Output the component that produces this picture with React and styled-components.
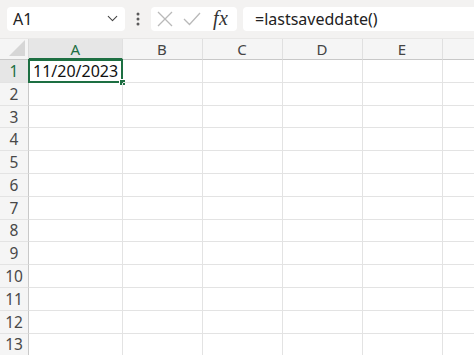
import React from 'react';
import styled, { createGlobalStyle } from 'styled-components';
import { ChevronDown } from 'lucide-react';

const GlobalStyle = createGlobalStyle`
    * { box-sizing: border-box; }
    body {
        margin: 0;
        background: #fff;
        font-family: "Noto Sans", "Open Sans", sans-serif;
    }
`;

const Page = styled.div`
    width: 474px;
    height: 355px;
    overflow: hidden;
    background: #fff;
`;

const FormulaBar = styled.div`
    display: flex;
    align-items: center;
    height: 39px;
    padding: 0 0 1px 7px;
    background: #f3f2f1;
    border-bottom: 1px solid #e8e7e6;
`;

const Box = styled.div`
    display: flex;
    align-items: center;
    height: 24px;
    background: #fff;
    border-radius: 4px;
    width: ${props => props.width ? props.width + 'px' : 'auto'};
    flex: ${props => props.grow ? 1 : 'none'};
`;

const NameBox = styled(Box)`
    justify-content: space-between;
    padding: 0 4px 0 6px;
    font-size: 16px;
    color: #222;
`;

const Dots = styled.div`
    width: 26px;
    display: flex;
    justify-content: center;
    color: #5a5a5a;
`;

const IconBox = styled(Box)`
    padding: 0 0 0 6px;
    color: #b9b9b9;
    & > svg { margin-right: 10px; }
`;

const Fx = styled.span`
    font-family: "Liberation Serif", serif;
    font-style: italic;
    font-size: 20px;
    color: #333;
    margin-left: 2px;
    letter-spacing: 0.5px;
`;

const FormulaInput = styled(Box)`
    margin-left: 6px;
    padding-left: 12px;
    border-radius: 4px 0 0 4px;
    font-size: 16px;
    color: #222;
`;

const Grid = styled.div`
    display: grid;
    grid-template-columns: 29px 93.5px repeat(5, 80px);
    grid-template-rows: 21px repeat(13, 22.8px);
`;

const Corner = styled.div`
    position: relative;
    background: #f5f5f5;
    border-right: 1px solid #dadada;
    border-bottom: 1px solid #c8c8c8;
    &::after {
        content: '';
        position: absolute;
        right: 3px;
        bottom: 3px;
        width: 16px;
        height: 16px;
        background: #d6d6d6;
        clip-path: polygon(100% 0, 100% 100%, 0 100%);
    }
`;

const ColHeader = styled.div`
    display: flex;
    align-items: center;
    justify-content: center;
    font-size: 15px;
    background: ${props => props.active ? '#e6e6e6' : '#f5f5f5'};
    color: ${props => props.active ? '#1d6f42' : '#444'};
    border-right: 1px solid #e0e0e0;
    border-bottom: ${props => props.active ? '2px solid #1d6f42' : '1px solid #c8c8c8'};
`;

const RowHeader = styled.div`
    display: flex;
    align-items: center;
    justify-content: center;
    font-size: 15.5px;
    background: ${props => props.active ? '#e6e6e6' : '#f5f5f5'};
    color: ${props => props.active ? '#1d6f42' : '#484848'};
    border-right: 1px solid #c8c8c8;
    border-bottom: 1px solid #e3e3e3;
`;

const Cell = styled.div`
    position: relative;
    display: flex;
    align-items: center;
    padding-left: 4px;
    font-size: 16px;
    color: #111;
    border-right: 1px solid #e3e3e3;
    border-bottom: 1px solid #e3e3e3;
    ${props => props.selected && `
        &::before {
            content: '';
            position: absolute;
            left: -1px;
            top: -1px;
            right: -1px;
            bottom: -1px;
            border: 2px solid #1d6f42;
        }
    `}
`;

const FillHandle = styled.span`
    position: absolute;
    right: -4px;
    bottom: -4px;
    width: 5px;
    height: 5px;
    background: #1d6f42;
    border: 1px solid #fff;
    box-sizing: content-box;
`;

const columns = ['A', 'B', 'C', 'D', 'E', ''];
const rows = Array.from({ length: 13 }, (_, i) => i + 1);

export default () => {
    return <Page>
        <GlobalStyle />
        <FormulaBar>
            <NameBox width={118}>
                <span>A1</span>
                <ChevronDown size={17} strokeWidth={1.5} color="#444" />
            </NameBox>
            <Dots>
                <svg width="4" height="14" viewBox="0 0 4 14">
                    <circle cx="2" cy="2" r="1.5" fill="currentColor" />
                    <circle cx="2" cy="7" r="1.5" fill="currentColor" />
                    <circle cx="2" cy="12" r="1.5" fill="currentColor" />
                </svg>
            </Dots>
            <IconBox width={86}>
                <svg width="16" height="16" viewBox="0 0 16 16">
                    <path d="M1 1 15 15M15 1 1 15" stroke="currentColor" strokeWidth="1.3" fill="none" />
                </svg>
                <svg width="18" height="14" viewBox="0 0 18 14">
                    <path d="M1 7 6.5 12.5 17 1" stroke="currentColor" strokeWidth="1.3" fill="none" />
                </svg>
                <Fx>fx</Fx>
            </IconBox>
            <FormulaInput grow>=lastsaveddate()</FormulaInput>
        </FormulaBar>
        <Grid>
            <Corner />
            {columns.map(c => <ColHeader key={c || 'F'} active={c === 'A'}>{c}</ColHeader>)}
            {rows.map(r => <React.Fragment key={r}>
                <RowHeader active={r === 1}>{r}</RowHeader>
                {columns.map((c, i) => r === 1 && i === 0
                    ? <Cell key={i} selected>11/20/2023<FillHandle /></Cell>
                    : <Cell key={i} />)}
            </React.Fragment>)}
        </Grid>
    </Page>
};
